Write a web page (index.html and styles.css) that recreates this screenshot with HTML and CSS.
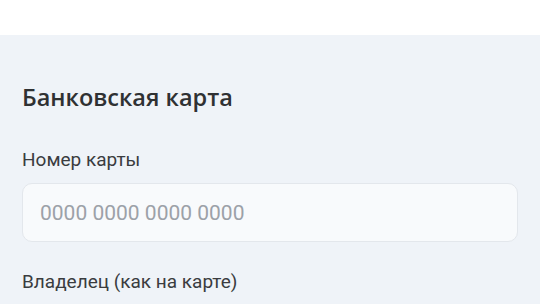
FILE: index.html
```html
<!DOCTYPE html>
<html lang="ru">
<head>
<meta charset="utf-8">
<link rel="stylesheet" href="styles.css">
</head>
<body>
<div class="topbar"></div>
<main class="page">
  <h2 class="title">Банковская карта</h2>
  <label class="field">
    <span class="label">Номер карты</span>
    <input class="input" type="text" placeholder="0000 0000 0000 0000">
  </label>
  <label class="field">
    <span class="label">Владелец (как на карте)</span>
  </label>
</main>
</body>
</html>
```
FILE: styles.css
```css
html, body {
  margin: 0;
  padding: 0;
  height: 100%;
}
body {
  background: #eff3f8;
  font-family: Roboto, "Noto Sans", sans-serif;
  overflow: hidden;
}
.topbar {
  height: 35px;
  background: #ffffff;
}
.page {
  padding: 48px 22px 0;
  display: flex;
  flex-direction: column;
}
.title {
  margin: 0;
  font-family: "Open Sans", "Noto Sans", sans-serif;
  font-size: 23.5px;
  line-height: 28px;
  font-weight: 600;
  color: #2f3133;
}
.field {
  display: flex;
  flex-direction: column;
}
.label {
  margin-top: 38px;
  font-size: 19px;
  line-height: 22px;
  color: #3a3c3f;
}
.input {
  margin-top: 12px;
  height: 59px;
  box-sizing: border-box;
  border: 1px solid #e3e7ec;
  border-radius: 10px;
  background: #f8fafc;
  padding: 0 17px;
  font-family: Roboto, sans-serif;
  font-size: 21px;
  color: #333;
}
.input::placeholder {
  color: #9ca1a8;
}
.field + .field .label {
  margin-top: 29px;
}
```
